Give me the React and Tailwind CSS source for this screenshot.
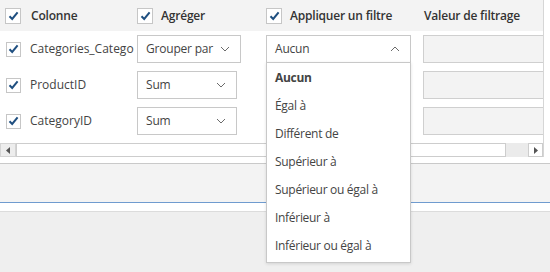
import React from "react";

const FONT = { fontFamily: '"Open Sans", "Noto Sans", sans-serif' };

function Check({ size = 15 }) {
  return (
    <div
      className="flex items-center justify-center border border-[#c6c6c6] bg-white shrink-0"
      style={{ width: size, height: size }}
    >
      <svg width="11" height="10" viewBox="0 0 11 10">
        <polyline points="1.5,5.2 4.2,8 9.6,1.4" fill="none" stroke="#1f4f80" strokeWidth="2" />
      </svg>
    </div>
  );
}

function Chevron({ up = false }) {
  return (
    <svg width="10" height="6" viewBox="0 0 10 6" className="shrink-0">
      <polyline
        points={up ? "1,5 5,1 9,5" : "1,1 5,5 9,1"}
        fill="none"
        stroke="#6b6b6b"
        strokeWidth="1"
      />
    </svg>
  );
}

function Select({ label, width, open = false }) {
  return (
    <div
      className="h-[28px] flex items-center justify-between border border-[#c8c8c8] bg-white pl-[8px] pr-[10px] text-[12px] text-[#444] tracking-[-0.2px]"
      style={{ width }}
    >
      <span>{label}</span>
      <Chevron up={open} />
    </div>
  );
}

const ROWS = [
  { name: "Categories_Catego", agg: "Grouper par", w: 104 },
  { name: "ProductID", agg: "Sum", w: 100 },
  { name: "CategoryID", agg: "Sum", w: 100 },
];

const OPTIONS = [
  "Aucun",
  "Égal à",
  "Différent de",
  "Supérieur à",
  "Supérieur ou égal à",
  "Inférieur à",
  "Inférieur ou égal à",
];

export default function App() {
  return (
    <div className="relative w-[550px] h-[272px] bg-[#efefef] overflow-hidden text-[#333]" style={FONT}>
      {/* grid + scrollbar */}
      <div className="h-[164px] bg-white border-b border-[#c9c9c9] flex">
        <div className="w-[544px] h-[157px] border-r border-[#d6d6d6] flex flex-col overflow-hidden">
          {/* header */}
          <div className="h-[31px] bg-[#f3f3f3] flex items-center text-[12px] font-semibold tracking-[-0.2px] text-[#333]">
            <div className="w-[137px] pl-[5px] flex items-center gap-[10px]">
              <Check size={16} />
              <span>Colonne</span>
            </div>
            <div className="w-[129px] flex items-center gap-[8px]">
              <Check size={16} />
              <span>Agréger</span>
            </div>
            <div className="w-[157px] flex items-center gap-[8px]">
              <Check size={16} />
              <span>Appliquer un filtre</span>
            </div>
            <div className="flex-1 pl-[1px]">Valeur de filtrage</div>
          </div>

          {/* rows */}
          {ROWS.map((r, i) => (
            <div key={r.name} className="h-[36px] flex items-center text-[12px]">
              <div className="w-[137px] pl-[6px] flex items-center gap-[9px] text-[#444]">
                <Check />
                <span>{r.name}</span>
              </div>
              <div className="w-[129px]">
                <Select label={r.agg} width={r.w} />
              </div>
              <div className="w-[157px]">
                {i === 0 ? <Select label="Aucun" width={145} open /> : null}
              </div>
              <div className="flex-1 h-[28px] bg-[#f3f3f3] border-y border-l border-[#cfcfcf]" />
            </div>
          ))}

          {/* horizontal scrollbar */}
          <div className="mt-[4px] h-[14px] flex">
            <div className="w-[16px] h-full bg-[#ededed] border border-[#d4d4d4] flex items-center justify-center">
              <svg width="4" height="7" viewBox="0 0 4 7">
                <polygon points="4,0 0,3.5 4,7" fill="#555" />
              </svg>
            </div>
            <div className="w-[490px] h-full bg-white border border-[#cdcdcd]" />
            <div className="flex-1 h-full bg-[#ebebeb]" />
            <div className="w-[15px] h-full bg-white border border-[#cdcdcd] flex items-center justify-center">
              <svg width="4" height="7" viewBox="0 0 4 7">
                <polygon points="0,0 4,3.5 0,7" fill="#555" />
              </svg>
            </div>
          </div>
        </div>
        <div className="flex-1" />
      </div>

      {/* lower panels */}
      <div className="h-[39px] bg-[#f3f3f3] border-b border-[#6f9bcf]" />
      <div className="h-[9px] bg-white border-b border-[#dcdcdc]" />

      {/* open dropdown */}
      <div className="absolute left-[266px] top-[62px] w-[145px] h-[201px] bg-white border border-[#c8c8c8] shadow-[0_1px_3px_rgba(0,0,0,0.12)] pt-[1px]">
        {OPTIONS.map((o, i) => (
          <div
            key={o}
            className={
              "h-[28px] flex items-center pl-[8px] text-[12px] tracking-[-0.3px] text-[#444] " +
              (i === 0 ? "font-bold text-[#333]" : "")
            }
          >
            {o}
          </div>
        ))}
      </div>
    </div>
  );
}
